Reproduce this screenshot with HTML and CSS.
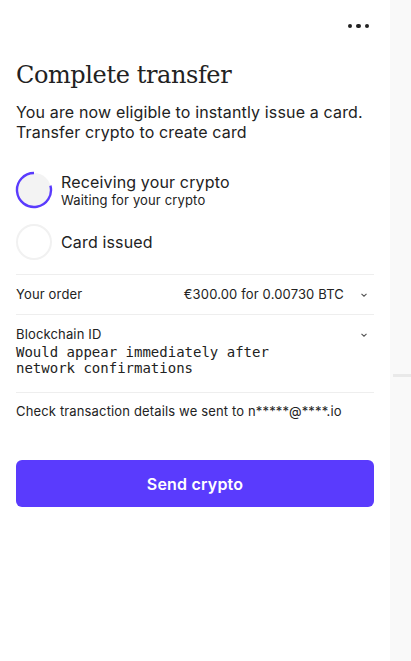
FILE: index.html
```html
<!DOCTYPE html>
<html lang="en">
<head>
    <meta charset="UTF-8">
    <meta name="viewport" content="width=device-width, initial-scale=1.0">
    <title>Complete transfer</title>
    <link rel="stylesheet" href="styles.css">
</head>
<body>
    <div class="layout">
        <div class="panel">
            <div class="topbar">
                <button class="more" aria-label="More">
                    <span></span><span></span><span></span>
                </button>
            </div>

            <h1>Complete transfer</h1>
            <p class="lead">You are now eligible to instantly issue a card. Transfer crypto to create card</p>

            <div class="steps">
                <div class="step">
                    <svg class="step-icon" width="38" height="38" viewBox="0 0 38 38">
                        <circle cx="19" cy="19" r="17" fill="#f3f3f3"/>
                        <path d="M19 2 A17 17 0 1 0 35.4 14.6" fill="none" stroke="#5a3bfd" stroke-width="2.4"/>
                    </svg>
                    <div>
                        <div class="step-title">Receiving your crypto</div>
                        <div class="step-sub">Waiting for your crypto</div>
                    </div>
                </div>
                <div class="step">
                    <svg class="step-icon" width="38" height="38" viewBox="0 0 38 38">
                        <circle cx="19" cy="19" r="17" fill="#fff" stroke="#f1f1f1" stroke-width="2"/>
                    </svg>
                    <div class="step-title">Card issued</div>
                </div>
            </div>

            <div class="row">
                <span class="row-label">Your order</span>
                <span class="row-value">€300.00 for 0.00730 BTC</span>
                <svg class="chev" width="8" height="6" viewBox="0 0 8 6"><path d="M1.5 1.8 L4 4.2 L6.5 1.8" fill="none" stroke="#555" stroke-width="1.1"/></svg>
            </div>

            <div class="row row-top">
                <div class="row-body">
                    <div class="row-label">Blockchain ID</div>
                    <div class="mono">Would appear immediately after<br>network confirmations</div>
                </div>
                <svg class="chev" width="8" height="6" viewBox="0 0 8 6"><path d="M1.5 1.8 L4 4.2 L6.5 1.8" fill="none" stroke="#555" stroke-width="1.1"/></svg>
            </div>

            <p class="note">Check transaction details we sent to n*****@****.io</p>

            <button class="send">Send crypto</button>
        </div>
        <div class="side">
            <div class="side-bar"></div>
        </div>
    </div>
</body>
</html>
```

FILE: styles.css
```css
body {
    margin: 0;
    background-color: #f9f9f9;
    color: #222;
    font-family: Inter, "Liberation Sans", sans-serif;
    letter-spacing: 0.15px;
}

.layout {
    display: flex;
    height: 661px;
}

.panel {
    width: 358px;
    padding: 0 16px;
    background-color: #fff;
}

.side {
    flex: 1;
    padding-top: 374px;
}

.side-bar {
    height: 3px;
    margin-left: 3px;
    background-color: #e9e9e9;
}

.topbar {
    display: flex;
    justify-content: flex-end;
    height: 50px;
}

.more {
    display: flex;
    gap: 4px;
    align-items: center;
    padding: 0;
    margin: 23px 5px 0 0;
    height: 6px;
    border: none;
    background: none;
}

.more span {
    width: 4.5px;
    height: 4.5px;
    border-radius: 50%;
    background-color: #222;
}

h1 {
    margin: 8px 0 0;
    font-family: "DejaVu Serif", serif;
    font-weight: normal;
    font-size: 24px;
    line-height: 34px;
    letter-spacing: -0.4px;
    color: #222;
}

.lead {
    margin: 10px 0 0;
    font-size: 16px;
    line-height: 20px;
    color: #222;
}

.steps {
    display: flex;
    flex-direction: column;
    gap: 14px;
    margin-top: 29px;
    padding-bottom: 13px;
    border-bottom: 1px solid #eee;
}

.step {
    display: flex;
    align-items: center;
    gap: 8px;
    margin-left: -1px;
}

.step-icon {
    flex: none;
}

.step-title {
    font-size: 16px;
    line-height: 20px;
}

.step-sub {
    font-size: 13px;
    line-height: 17px;
}

.row {
    display: flex;
    align-items: center;
    padding: 11px 0;
    border-bottom: 1px solid #eee;
    font-size: 13px;
    line-height: 17px;
}

.row-top {
    align-items: flex-start;
    padding: 11px 0 16px;
}

.row-label {
    flex: 1;
}

.row-body {
    flex: 1;
}

.row-value {
    margin-right: 16px;
}

.chev {
    flex: none;
    margin-right: 6px;
}

.row-top .chev {
    margin-top: 6px;
}

.mono {
    margin-top: 1px;
    font-family: "DejaVu Sans Mono", monospace;
    font-size: 14px;
    line-height: 16px;
    letter-spacing: 0;
}

.note {
    margin: 10px 0 0;
    font-size: 13px;
    line-height: 17px;
}

.send {
    display: block;
    width: 100%;
    height: 47px;
    margin-top: 40px;
    border: none;
    border-radius: 6px;
    background-color: #5a3bfd;
    color: #fff;
    font-family: Inter, "Liberation Sans", sans-serif;
    font-size: 16px;
    font-weight: 600;
    letter-spacing: 0.2px;
    cursor: pointer;
}
```
